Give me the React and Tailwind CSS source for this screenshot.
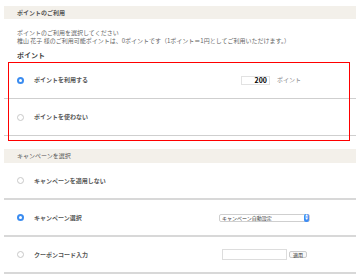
import React from "react";

const jp = { fontFamily: '"Noto Sans CJK JP", "Noto Sans", sans-serif' };

function Radio({ checked }) {
  return checked ? (
    <span className="w-[7px] h-[7px] rounded-full bg-[#3b8cf0] flex items-center justify-center shrink-0">
      <span className="w-[3px] h-[3px] rounded-full bg-white" />
    </span>
  ) : (
    <span className="w-[7px] h-[7px] rounded-full border border-[#c8c8c8] bg-white shrink-0" />
  );
}

function Row({ checked, label, children, line = "border-b border-[#cfcfcf]" }) {
  return (
    <div className={`h-[37px] flex items-center pl-[13px] pr-[8px] ${line}`}>
      <Radio checked={checked} />
      <span className="ml-[10px] text-[6px] leading-[8px] font-bold text-[#555]">{label}</span>
      <div className="ml-auto flex items-center">{children}</div>
    </div>
  );
}

export default function App() {
  return (
    <div className="relative w-[360px] h-[280px] bg-white px-[4px] pt-[6px] overflow-hidden" style={jp}>
      <div className="w-[352px]">
        <div className="h-[13px] bg-[#f3f0ea] flex items-center pl-[13px] text-[6px] leading-[8px] font-bold text-[#555]">
          ポイントのご利用
        </div>
        <div className="h-[30px] pl-[13px] pt-[10px] text-[6px] leading-[8px] text-[#666] flex flex-col">
          <p className="h-[8px]">ポイントのご利用を選択してください</p>
          <p className="h-[8px]">椎山 花子 様のご利用可能ポイントは、0ポイントです（1ポイント＝1円としてご利用いただけます。）</p>
        </div>
        <div className="h-[13px] pl-[13px] pt-[2px] text-[7px] leading-[8px] font-bold text-[#444]">ポイント</div>
        <Row checked label="ポイントを利用する">
          <div className="w-[29px] h-[9px] border border-[#e2e2e2] flex items-center justify-end pr-[2px] text-[7px] font-bold text-black leading-none">
            200
          </div>
          <span className="ml-[7px] mr-[47px] text-[6px] leading-[8px] text-[#888]">ポイント</span>
        </Row>
        <Row label="ポイントを使わない" />
        <div className="h-[13px]" />
        <div className="h-[14px] bg-[#f3f0ea] flex items-center pl-[13px] text-[6px] leading-[8px] text-[#555]">
          キャンペーンを選択
        </div>
        <Row label="キャンペーンを適用しない" line="border-b-2 border-[#d8d8d8]" />
        <Row checked label="キャンペーン選択" line="border-b-2 border-[#d8d8d8]">
          <div className="mr-[38px] w-[91px] h-[8px] border border-[#cfcfcf] rounded-[2px] flex items-center justify-between pl-[2px] bg-white">
            <span className="text-[5px] leading-none text-[#333]">キャンペーン自動設定</span>
            <span className="w-[5px] h-[8px] rounded-[2px] bg-[#3d8cf5] flex flex-col items-center justify-center text-white text-[3px] leading-[3px]">
              <span>▲</span>
              <span>▼</span>
            </span>
          </div>
        </Row>
        <Row label="クーポンコード入力" line="border-b-2 border-[#d8d8d8]">
          <div className="w-[65px] h-[11px] border border-[#ddd] bg-white" />
          <div className="ml-[2px] mr-[41px] w-[18px] h-[7px] border border-[#ccc] rounded-[2px] flex items-center justify-center text-[5px] leading-none text-[#333] bg-[#f8f8f8]">
            適用
          </div>
        </Row>
      </div>
      <div className="absolute left-[8px] top-[62px] w-[342px] h-[79px] border border-[#ff0000] pointer-events-none" />
    </div>
  );
}
